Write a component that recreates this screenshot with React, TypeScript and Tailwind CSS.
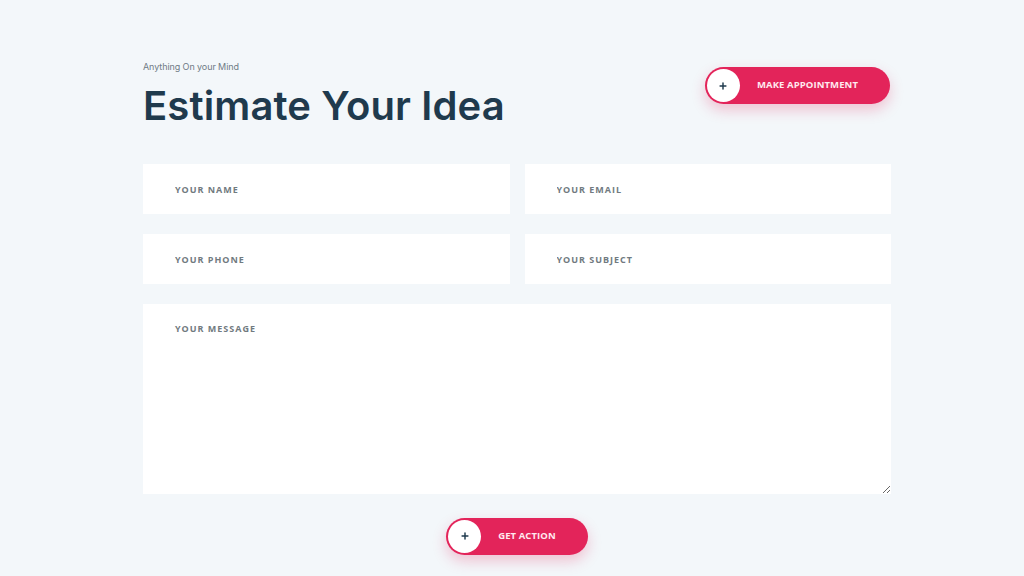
import { Plus } from 'lucide-react';

function PillButton({ label }: { label: string }) {
    return (
        <button
            type="button"
            className="flex items-center h-[37px] rounded-full bg-[#e3245a] p-[2px] pr-[32px] shadow-[0_6px_14px_rgba(227,36,90,0.25)]"
        >
            <span className="flex items-center justify-center w-[33px] h-[33px] rounded-full bg-white">
                <Plus className="w-[10px] h-[10px] text-[#1f3a4d]" strokeWidth={3.5} />
            </span>
            <span className="ml-[17px] text-[9.5px] font-bold tracking-[0.01em] text-[#ffe9ef] uppercase">
                {label}
            </span>
        </button>
    );
}

const inputClass =
    "h-[50px] w-full bg-white px-[32px] pt-[2px] text-[9px] font-bold tracking-[0.11em] text-gray-700 outline-none placeholder:text-[#717a80] placeholder:uppercase";

export default function App() {
    return (
        <div
            className="min-h-screen w-full bg-[#f3f7fa] pt-[60px]"
            style={{ fontFamily: '"Open Sans", "Liberation Sans", sans-serif' }}
        >
            <section className="w-[748px] ml-[143px]">
                {/* Header */}
                <div className="flex justify-between items-start">
                    <div>
                        <p className="text-[9px] text-[#6f7b85] tracking-[-0.01em]" style={{ fontFamily: 'Inter, sans-serif' }}>
                            Anything On your Mind
                        </p>
                        <h2
                            className="mt-[8px] text-[40px] leading-[48px] font-semibold text-[#1f3a4d] tracking-[0.003em]"
                            style={{ fontFamily: 'Inter, sans-serif' }}
                        >
                            Estimate Your Idea
                        </h2>
                    </div>
                    <div className="mt-[7px] mr-[1px]">
                        <PillButton label="Make Appointment" />
                    </div>
                </div>

                {/* Form */}
                <form className="mt-[34px]">
                    <div className="grid grid-cols-2 gap-x-[15px] gap-y-[20px]">
                        <input className={inputClass} placeholder="YOUR NAME" />
                        <input className={inputClass} placeholder="YOUR EMAIL" />
                        <input className={inputClass} placeholder="YOUR PHONE" />
                        <input className={inputClass} placeholder="YOUR SUBJECT" />
                    </div>
                    <textarea
                        className="mt-[20px] block h-[190px] w-full bg-white px-[32px] py-[18px] text-[9px] font-bold tracking-[0.11em] text-gray-700 outline-none placeholder:text-[#717a80]"
                        placeholder="YOUR MESSAGE"
                    />
                    <div className="flex justify-center mt-[24px]">
                        <PillButton label="Get Action" />
                    </div>
                </form>
            </section>
        </div>
    );
}
